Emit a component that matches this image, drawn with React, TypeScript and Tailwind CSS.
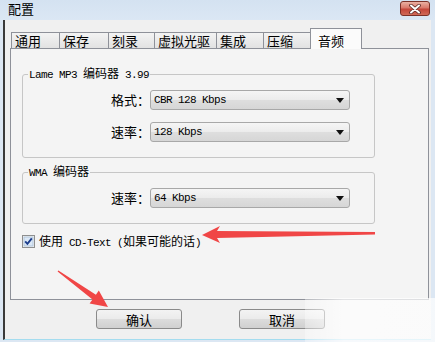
const mono = "[font-family:'Liberation_Mono',monospace] text-[11px] tracking-[-0.6px]"

const tabs = [
  { label: "通用", w: "w-[48px]" },
  { label: "保存", w: "w-[49px]" },
  { label: "刻录", w: "w-[46px]" },
  { label: "虚拟光驱", w: "w-[62px]" },
  { label: "集成", w: "w-[47px]" },
  { label: "压缩", w: "w-[47px]" },
]

function Select({ value }: { value: string }) {
  return (
    <div className="w-[200px] h-[20px] rounded-[3px] border border-[#a8a8a8] bg-[linear-gradient(#f5f5f5_0%,#ececec_48%,#dedede_52%,#d6d6d6_100%)] flex items-center justify-between pl-[3px] pr-[5px]">
      <span className={mono}>{value}</span>
      <svg width="8" height="5" viewBox="0 0 8 5">
        <path d="M0 0h8L4 5z" fill="#111" />
      </svg>
    </div>
  )
}

function Row({ label, value }: { label: string, value: string }) {
  return (
    <div className="flex items-center h-[20px]">
      <div className="w-[127px] text-right text-[13px] leading-[20px]">{label}</div>
      <Select value={value} />
    </div>
  )
}

function Checkbox() {
  return (
    <svg width="13" height="13" viewBox="0 0 13 13">
      <rect x="0.5" y="0.5" width="12" height="12" fill="#f4f4f4" stroke="#8e8f8f" />
      <rect x="2" y="2" width="9" height="9" fill="#dbe8f6" stroke="#a9bfd6" strokeWidth="0.8" />
      <path d="M3.2 6.4 5.4 8.8 9.8 3.4" fill="none" stroke="#1c3d8c" strokeWidth="1.9" />
    </svg>
  )
}

export default function App() {
  return (
    <div className="w-[435px] h-[342px] relative overflow-hidden flex flex-col bg-[#dce7f3] pb-[2px] [font-family:'Noto_Sans_CJK_SC','Noto_Sans',sans-serif] text-black">
      {/* title bar */}
      <div className="h-[20px] flex justify-between bg-[linear-gradient(#d4e2f1,#dbe7f4)] pr-[5px]">
        <div className="pl-[8px] text-[13px] leading-[18px]">配置</div>
        <div className="mt-[1px] w-[30px] h-[15px] rounded-[3px] border border-[#7b3128] bg-[linear-gradient(#eab0a2_0%,#d9786a_45%,#c4463a_55%,#d06a58_100%)] flex items-center justify-center">
          <svg width="14" height="10" viewBox="0 0 14 10">
            <path d="M3 1.5 11 8.5M11 1.5 3 8.5" stroke="#5a2a26" strokeWidth="3.6" strokeLinecap="round" />
            <path d="M3 1.5 11 8.5M11 1.5 3 8.5" stroke="#fff" strokeWidth="2" strokeLinecap="round" />
          </svg>
        </div>
      </div>

      {/* client */}
      <div className="flex-1 flex pl-[3px] pr-[4px]">
        <div className="flex-1 flex flex-col bg-[#f0f0f0] border-l-2 border-l-[#3a3a3a] border-b border-b-[#a4dcef] pt-[8px]">
          {/* tabs */}
          <div className="flex items-end h-[20px] ml-[6px]">
            {tabs.map((t) => (
              <div
                key={t.label}
                className={`${t.w} h-[16px] border-t border-l border-[#8e9199] bg-[linear-gradient(#f3f3f3,#e2e2e2)] text-[13px] leading-[16px] pl-[3px]`}
              >
                {t.label}
              </div>
            ))}
            <div className="w-[52px] h-[21px] -mb-px relative z-10 border-t border-l border-r border-[#8e9199] bg-[#fbfbfb] text-[13px] leading-[16px] pl-[7px] pt-[4px]">
              音频
            </div>
          </div>

          {/* panel */}
          <div className="ml-[5px] w-[419px] h-[252px] border border-[#8e9199] bg-[#f4f4f4] flex flex-col">
            <fieldset className="ml-[11px] mt-[17px] w-[353px] border border-[#c6c6c6] rounded-[3px] pt-[8px] pb-[15px] flex flex-col gap-[12px]">
              <legend className="ml-[5px] px-[1px] text-[12px] leading-[14px]">
                <span className={mono}>Lame MP3 </span>编码器<span className={mono}> 3.99</span>
              </legend>
              <Row label="格式：" value="CBR 128 Kbps" />
              <Row label="速率：" value="128 Kbps" />
            </fieldset>

            <fieldset className="ml-[11px] mt-[6px] w-[353px] border border-[#c6c6c6] rounded-[3px] pt-[8px] pb-[15px]">
              <legend className="ml-[5px] px-[1px] text-[12px] leading-[14px]">
                <span className={mono}>WMA </span>编码器
              </legend>
              <Row label="速率：" value="64 Kbps" />
            </fieldset>

            <div className="flex items-center ml-[11px] mt-[11px] h-[13px] gap-[4px]">
              <Checkbox />
              <span className="text-[12px] leading-[13px]">
                使用<span className={mono}> CD-Text (</span>如果可能的话<span className={mono}>)</span>
              </span>
            </div>
          </div>

          {/* buttons */}
          <div className="flex mt-[9px] ml-[91px] gap-[57px]">
            <button className="w-[86px] h-[20px] rounded-[3px] border border-[#8a8a8a] bg-[linear-gradient(#f3f3f3_0%,#ebebeb_48%,#dcdcdc_52%,#d0d0d0_100%)] text-[13px] leading-none">
              确认
            </button>
            <button className="w-[86px] h-[20px] rounded-[3px] border border-[#8a8a8a] bg-[linear-gradient(#f3f3f3_0%,#ebebeb_48%,#dcdcdc_52%,#d0d0d0_100%)] text-[13px] leading-none">
              取消
            </button>
          </div>
        </div>
      </div>

      {/* annotation arrows */}
      <svg className="absolute inset-0 pointer-events-none" width="435" height="342" viewBox="0 0 435 342">
        <polygon points="202,235 220,226 217,231 375,232 375,234.5 217,238 220,243" fill="#f04646" />
        <polygon points="108,307 89.6,303.6 92.5,299.5 57.6,271.6 58.4,270.4 95.9,294.7 98.8,290.6" fill="#f04646" />
      </svg>

      {/* watermark haze */}
      <div className="absolute left-[305px] top-[298px] w-[130px] h-[44px] bg-[linear-gradient(90deg,rgba(255,255,255,0.35),rgba(255,255,255,0.75)_30%,rgba(255,255,255,0.7))]" />
    </div>
  )
}
